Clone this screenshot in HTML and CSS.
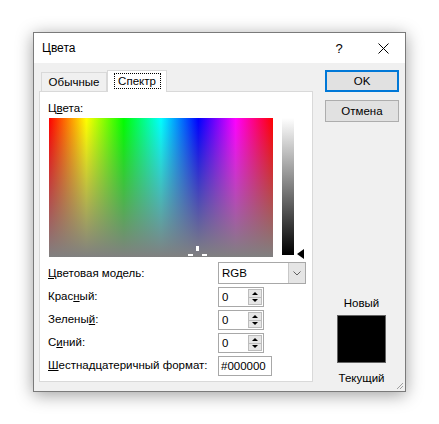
FILE: index.html
```html
<!DOCTYPE html>
<html lang="ru">
<head>
<meta charset="utf-8">
<title>Цвета</title>
<link rel="stylesheet" href="styles.css">
</head>
<body>
<div class="dialog">
  <div class="titlebar">
    <span class="title">Цвета</span>
    <span class="tbtn help">?</span>
    <span class="tbtn close"><svg width="11" height="11" viewBox="0 0 11 11"><path d="M0.5 0.5 L10.5 10.5 M10.5 0.5 L0.5 10.5" stroke="#000" stroke-width="1" fill="none"/></svg></span>
  </div>
  <div class="body">
    <div class="left">
      <div class="tabs">
        <div class="tab">Обычные</div>
        <div class="tab active"><span class="focus">Спектр</span></div>
      </div>
      <div class="panel">
        <div class="cap">Ц<u>в</u>ета:</div>
        <div class="picker">
          <div class="spectrum">
            <span class="cross cl"></span>
            <span class="cross ct"></span>
            <span class="cross cr"></span>
          </div>
          <div class="lum"></div>
          <div class="arrow"></div>
        </div>
        <div class="form">
          <div class="row">
            <span class="lbl first"><u>Ц</u>ветовая модель:</span>
            <div class="combo"><span class="val">RGB</span><span class="drop"><svg width="8" height="5" viewBox="0 0 8 5"><path d="M0.5 0.5 L4 4 L7.5 0.5" stroke="#606060" fill="none"/></svg></span></div>
          </div>
          <div class="row">
            <span class="lbl">Крас<u>н</u>ый:</span>
            <div class="spin"><span class="val">0</span><span class="btns"><span class="sb up"></span><span class="sb down"></span></span></div>
          </div>
          <div class="row">
            <span class="lbl">Зелены<u>й</u>:</span>
            <div class="spin"><span class="val">0</span><span class="btns"><span class="sb up"></span><span class="sb down"></span></span></div>
          </div>
          <div class="row">
            <span class="lbl">С<u>и</u>ний:</span>
            <div class="spin"><span class="val">0</span><span class="btns"><span class="sb up"></span><span class="sb down"></span></span></div>
          </div>
          <div class="row">
            <span class="lbl"><u>Ш</u>естнадцатеричный формат:</span>
            <div class="hex">#000000</div>
          </div>
        </div>
      </div>
    </div>
    <div class="right">
      <div class="btn ok">OK</div>
      <div class="btn">Отмена</div>
      <div class="preview">
        <div class="plabel new">Новый</div>
        <div class="swatch"></div>
        <div class="plabel cur">Текущий</div>
      </div>
    </div>
  </div>
  <svg class="grip" width="8" height="8" viewBox="0 0 8 8"><path d="M7 1 L1 7 M7 4 L4 7 M7 7 L7 7" stroke="#a0a0a0" stroke-width="1" fill="none"/></svg>
</div>
</body>
</html>
```
FILE: styles.css
```css
html, body {
  margin: 0;
  padding: 0;
  background: #ffffff;
}
body {
  font-family: "Liberation Sans", "Noto Sans", sans-serif;
  font-size: 11.5px;
  color: #000;
  width: 439px;
  height: 424px;
  overflow: hidden;
}
.dialog {
  position: relative;
  box-sizing: border-box;
  margin: 32px 0 0 33px;
  width: 373px;
  height: 360px;
  border: 1px solid #7a7a7a;
  background: #f0f0f0;
  box-shadow: 0 3px 16px rgba(0, 0, 0, 0.38);
}
.titlebar {
  display: flex;
  align-items: center;
  height: 30px;
  background: #ffffff;
}
.title {
  flex: 1;
  padding-left: 8px;
  line-height: 16px;
  font-size: 12px;
}
.tbtn {
  width: 44px;
  height: 30px;
  display: flex;
  align-items: center;
  justify-content: center;
}
.help {
  font-size: 13px;
}
.body {
  display: flex;
  padding-left: 5px;
}
.left {
  width: 274px;
  padding-top: 7px;
}
.tabs {
  display: flex;
  align-items: flex-end;
  height: 21px;
  padding-left: 2px;
}
.tab {
  box-sizing: border-box;
  height: 19px;
  width: 66px;
  border: 1px solid #d9d9d9;
  border-bottom: none;
  background: #f0f0f0;
  display: flex;
  align-items: center;
  justify-content: center;
  line-height: 16px;
}
.tab.active {
  position: relative;
  z-index: 1;
  width: 60px;
  height: 22px;
  margin-bottom: -1px;
  background: #ffffff;
  padding-bottom: 2px;
}
.focus {
  box-sizing: border-box;
  display: block;
  width: 47px;
  height: 16px;
  line-height: 14px;
  text-align: center;
  border: 1px dotted #000;
}
.panel {
  box-sizing: border-box;
  height: 291px;
  border: 1px solid #d9d9d9;
  background: #ffffff;
  padding: 8px 0 0 8px;
}
.cap {
  line-height: 16px;
  height: 16px;
}
.picker {
  display: flex;
  margin-top: 2px;
  margin-left: 1px;
  height: 139px;
}
.spectrum {
  position: relative;
  width: 224px;
  height: 139px;
  background:
    linear-gradient(to bottom, rgba(128, 128, 128, 0) 0%, rgba(128, 128, 128, 1) 100%),
    linear-gradient(to right, #ff0000 0%, #ffff00 16.67%, #00ff00 33.33%, #00ffff 50%, #0000ff 66.67%, #ff00ff 83.33%, #ff0000 100%);
}
.cross {
  position: absolute;
  background: #ffffff;
}
.cl { left: 139px; top: 136px; width: 5px; height: 2px; }
.cr { left: 153px; top: 136px; width: 5px; height: 2px; }
.ct { left: 147px; top: 128px; width: 3px; height: 5px; }
.lum {
  width: 12px;
  height: 137px;
  margin-left: 9px;
  background: linear-gradient(to bottom, #ffffff, #808080 50%, #000000);
}
.arrow {
  align-self: flex-end;
  margin-left: 3px;
  margin-bottom: -2px;
  width: 0;
  height: 0;
  border-top: 5px solid transparent;
  border-bottom: 5px solid transparent;
  border-right: 7px solid #000;
}
.form {
  margin-top: 5px;
  display: flex;
  flex-direction: column;
  gap: 3px;
}
.row {
  display: flex;
  align-items: center;
}
.lbl {
  width: 170px;
  line-height: 16px;
  margin-top: -2px;
  white-space: nowrap;
}
.lbl.first {
  margin-top: 0;
}
.combo {
  box-sizing: border-box;
  width: 88px;
  height: 22px;
  border: 1px solid #a8a8a8;
  display: flex;
  background: #ffffff;
}
.val {
  flex: 1;
  padding-left: 3px;
  line-height: 20px;
}
.drop {
  width: 16px;
  border-left: 1px solid #c8c8c8;
  background: #e5e5e5;
  display: flex;
  align-items: center;
  justify-content: center;
}
.spin {
  box-sizing: border-box;
  width: 46px;
  height: 20px;
  border: 1px solid #a8a8a8;
  display: flex;
  background: #fff;
}
.spin .val {
  line-height: 18px;
}
.btns {
  display: flex;
  flex-direction: column;
  width: 14px;
  padding: 1px 1px 1px 0;
}
.sb {
  flex: 1;
  border: 1px solid #bcbcbc;
  background: #e6e6e6;
  display: flex;
  align-items: center;
  justify-content: center;
}
.sb.up { border-bottom: none; }
.sb.up::after {
  content: "";
  border-left: 3px solid transparent;
  border-right: 3px solid transparent;
  border-bottom: 3px solid #000;
}
.sb.down::after {
  content: "";
  border-left: 3px solid transparent;
  border-right: 3px solid transparent;
  border-top: 3px solid #000;
}
.hex {
  box-sizing: border-box;
  width: 54px;
  height: 20px;
  border: 1px solid #a8a8a8;
  padding-left: 2px;
  line-height: 18px;
  background: #fff;
}
.right {
  margin-left: 12px;
  padding-top: 7px;
  display: flex;
  flex-direction: column;
  width: 74px;
}
.btn {
  box-sizing: border-box;
  height: 22px;
  border: 1px solid #adadad;
  background: #e1e1e1;
  display: flex;
  align-items: center;
  justify-content: center;
  line-height: 16px;
}
.btn.ok {
  border: 2px solid #0078d7;
  margin-bottom: 8px;
}
.preview {
  margin-top: 173px;
  margin-left: 12px;
  width: 49px;
  display: flex;
  flex-direction: column;
  align-items: center;
}
.plabel {
  line-height: 16px;
  white-space: nowrap;
}
.swatch {
  box-sizing: border-box;
  width: 49px;
  height: 48px;
  margin-top: 4px;
  background: #000;
  border: 1px solid #646464;
}
.cur {
  margin-top: 7px;
}
.grip {
  position: absolute;
  right: 1px;
  bottom: 1px;
}
```
